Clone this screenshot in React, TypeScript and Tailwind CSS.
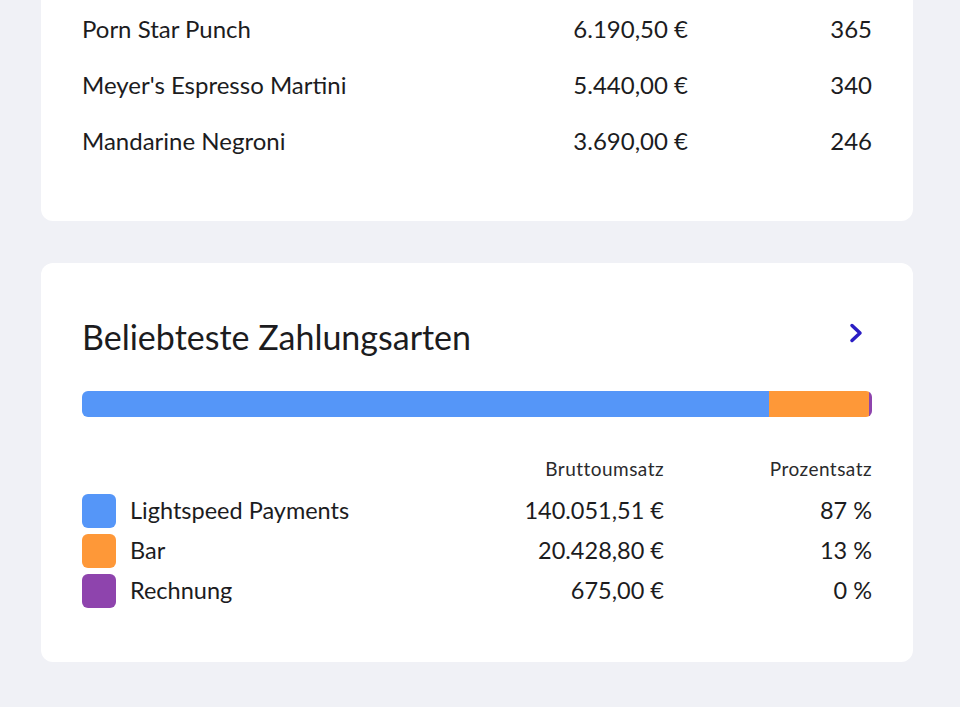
import React from "react";

const drinks = [
  { name: "Porn Star Punch", total: "6.190,50 €", count: "365" },
  { name: "Meyer's Espresso Martini", total: "5.440,00 €", count: "340" },
  { name: "Mandarine Negroni", total: "3.690,00 €", count: "246" },
];

const payments = [
  { name: "Lightspeed Payments", total: "140.051,51 €", share: "87 %", color: "bg-[#5596f8]" },
  { name: "Bar", total: "20.428,80 €", share: "13 %", color: "bg-[#fe9838]" },
  { name: "Rechnung", total: "675,00 €", share: "0 %", color: "bg-[#8e44ad]" },
];

export default function App() {
  return (
    <div className="min-h-[707px] bg-[#f0f1f6] pl-[41px] pr-[47px] pb-[46px] font-['Lato','Noto_Sans',sans-serif] text-[#1c1c1e]">
      {/* Top drinks card (scrolled, top cut off) */}
      <div className="rounded-b-xl bg-white px-[41px] pb-[53px]">
        {drinks.map((d) => (
          <div key={d.name} className="flex h-[56px] items-center pt-[2px] text-[24px]">
            <div className="flex-1">{d.name}</div>
            <div className="text-right">{d.total}</div>
            <div className="w-[184px] text-right">{d.count}</div>
          </div>
        ))}
      </div>

      {/* Payment methods */}
      <div className="mt-[42px] rounded-xl bg-white px-[41px] pt-[54px] pb-[54px]">
        <div className="flex items-center justify-between">
          <h2 className="text-[34px] leading-[40px] font-normal">Beliebteste Zahlungsarten</h2>
          <svg width="16" height="22" viewBox="0 0 16 22" className="mr-[8px] mb-[8px]">
            <path d="M4 3.5 L12 11 L4 18.5" fill="none" stroke="#2b1ec4" strokeWidth="3.5" strokeLinecap="round" strokeLinejoin="round" />
          </svg>
        </div>

        <div className="mt-[34px] flex h-[26px] overflow-hidden rounded-md">
          <div className="w-[87%] bg-[#5596f8]" />
          <div className="w-[12.6%] bg-[#fe9838]" />
          <div className="flex-1 bg-[#8e44ad]" />
        </div>

        <div className="mt-[40px] flex text-[19px] leading-[24px] tracking-[0.025em] text-[#2a2a2c]">
          <div className="flex-1" />
          <div className="text-right">Bruttoumsatz</div>
          <div className="w-[208px] text-right">Prozentsatz</div>
        </div>

        <div className="mt-[13px] flex flex-col gap-[6px]">
          {payments.map((p) => (
            <div key={p.name} className="flex h-[34px] items-center text-[23.5px]">
              <div className={`h-[34px] w-[34px] rounded-md ${p.color}`} />
              <div className="ml-[14px] flex-1">{p.name}</div>
              <div className="text-right">{p.total}</div>
              <div className="w-[208px] text-right">{p.share}</div>
            </div>
          ))}
        </div>
      </div>
    </div>
  );
}
